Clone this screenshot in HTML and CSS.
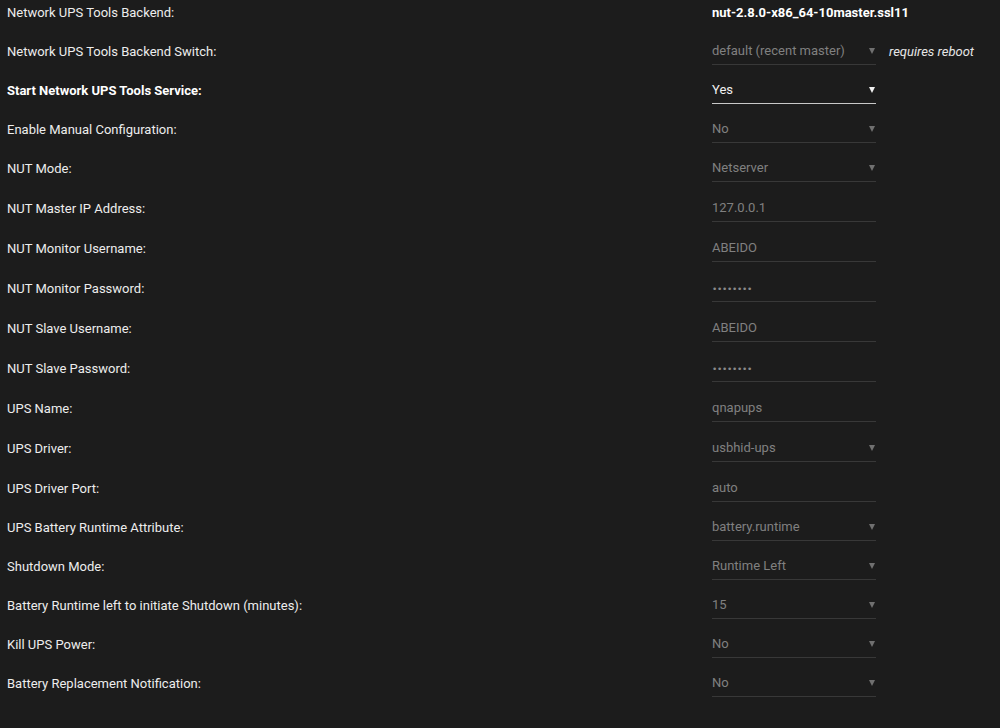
FILE: index.html
```html
<!DOCTYPE html>
<html lang="en">
<head>
    <meta charset="UTF-8">
    <title>NUT Settings</title>
    <link rel="stylesheet" href="styles.css">
</head>
<body>
    <div class="settings">
        <div class="row">
            <div class="label">Network UPS Tools Backend:</div>
            <div class="static">nut-2.8.0-x86_64-10master.ssl11</div>
        </div>
        <div class="row">
            <div class="label">Network UPS Tools Backend Switch:</div>
            <div class="field select off">default (recent master)</div>
            <div class="note">requires reboot</div>
        </div>
        <div class="row">
            <div class="label strong">Start Network UPS Tools Service:</div>
            <div class="field select on">Yes</div>
        </div>
        <div class="row">
            <div class="label">Enable Manual Configuration:</div>
            <div class="field select off">No</div>
        </div>
        <div class="row">
            <div class="label">NUT Mode:</div>
            <div class="field select off">Netserver</div>
        </div>
        <div class="row tall">
            <div class="label">NUT Master IP Address:</div>
            <div class="field off">127.0.0.1</div>
        </div>
        <div class="row tall">
            <div class="label">NUT Monitor Username:</div>
            <div class="field off">ABEIDO</div>
        </div>
        <div class="row tall">
            <div class="label">NUT Monitor Password:</div>
            <div class="field off"><span class="dots">••••••••</span></div>
        </div>
        <div class="row tall">
            <div class="label">NUT Slave Username:</div>
            <div class="field off">ABEIDO</div>
        </div>
        <div class="row tall">
            <div class="label">NUT Slave Password:</div>
            <div class="field off"><span class="dots">••••••••</span></div>
        </div>
        <div class="row tall">
            <div class="label">UPS Name:</div>
            <div class="field off">qnapups</div>
        </div>
        <div class="row tall">
            <div class="label">UPS Driver:</div>
            <div class="field select off">usbhid-ups</div>
        </div>
        <div class="row tall">
            <div class="label">UPS Driver Port:</div>
            <div class="field off">auto</div>
        </div>
        <div class="row">
            <div class="label">UPS Battery Runtime Attribute:</div>
            <div class="field select off">battery.runtime</div>
        </div>
        <div class="row">
            <div class="label">Shutdown Mode:</div>
            <div class="field select off">Runtime Left</div>
        </div>
        <div class="row">
            <div class="label">Battery Runtime left to initiate Shutdown (minutes):</div>
            <div class="field select off">15</div>
        </div>
        <div class="row">
            <div class="label">Kill UPS Power:</div>
            <div class="field select off">No</div>
        </div>
        <div class="row">
            <div class="label">Battery Replacement Notification:</div>
            <div class="field select off">No</div>
        </div>
    </div>
</body>
</html>
```

FILE: styles.css
```css
body {
    margin: 0;
    background: #1c1c1c;
    color: #ededed;
    font-family: Roboto, sans-serif;
    font-size: 13px;
}

/* page is scrolled a little, first row sits under the top edge */
.settings {
    margin-top: -7px;
}

.row {
    display: grid;
    grid-template-columns: 712px 164px auto;
    align-items: center;
    height: 39px;
}
.row.tall {
    height: 40px;
}

.label {
    padding-left: 7px;
}
.label.strong {
    font-weight: 700;
    color: #fff;
}

.static {
    font-weight: 700;
    color: #fff;
    white-space: nowrap;
}

.field {
    position: relative;
    height: 26px;
    line-height: 26px;
    border-bottom: 1px solid #383838;
}
.field.off {
    color: #808080;
}
.field.on {
    color: #f0f0f0;
    border-bottom-color: #c8c8c8;
}

.field.select::after {
    content: "";
    position: absolute;
    right: 1px;
    top: 10px;
    border-left: 3px solid transparent;
    border-right: 3px solid transparent;
    border-top: 6px solid #707070;
}
.field.on::after {
    border-top-color: #f0f0f0;
}

.dots {
    font-family: "DejaVu Sans", sans-serif;
    font-size: 9px;
    letter-spacing: -0.3px;
    color: #8a8a8a;
}

.note {
    padding-left: 13px;
    font-style: italic;
    color: #e6e6e6;
}
```
